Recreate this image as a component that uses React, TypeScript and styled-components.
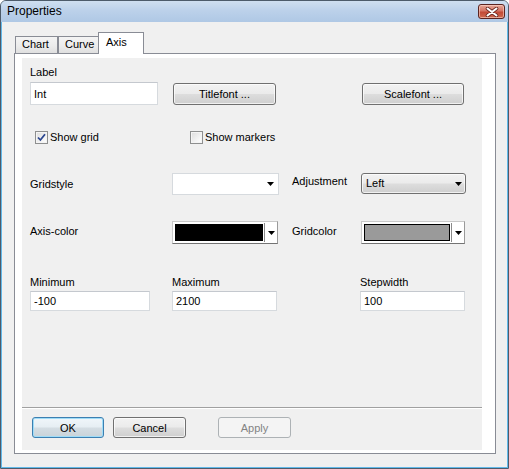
import React from 'react';
import styled, { createGlobalStyle, css } from 'styled-components';

const GlobalStyle = createGlobalStyle`
  html, body {
    margin: 0;
    padding: 0;
    background: #ffffff;
  }
  body {
    font-family: "Liberation Sans", Arial, sans-serif;
    font-size: 11px;
    color: #000;
  }
  * {
    box-sizing: border-box;
  }
`;

const Window = styled.div`
  width: 509px;
  height: 469px;
  display: flex;
  flex-direction: column;
  background: #f0f0f0;
  border: 1px solid #4d5b6a;
  border-radius: 6px 6px 0 0;
  box-shadow: inset 0 0 0 1px #62b9ea;
  overflow: hidden;
`;

const TitleBar = styled.div`
  height: 21px;
  flex: none;
  display: flex;
  align-items: flex-start;
  justify-content: space-between;
  padding: 0 3px 0 6px;
  background: linear-gradient(#cfdff0 0%, #bcd1ea 45%, #afc8e5 100%);
`;

const Title = styled.span`
  font-size: 12px;
  line-height: 21px;
  color: #000;
`;

const CloseButton = styled.button`
  margin-top: 3px;
  width: 27px;
  height: 15px;
  padding: 0;
  border: 1px solid #5b2420;
  border-radius: 3px;
  background: linear-gradient(#e6a797 0%, #d47565 45%, #c24a37 55%, #cf6a4f 100%);
  box-shadow: inset 0 0 0 1px rgba(255, 220, 210, 0.55);
  display: flex;
  align-items: center;
  justify-content: center;
  cursor: default;
`;

const Body = styled.div`
  flex: 1;
  display: flex;
  flex-direction: column;
  padding: 10px 12px 14px 13px;
  min-height: 0;
`;

const TabRow = styled.div`
  height: 22px;
  flex: none;
  display: flex;
  align-items: flex-end;
  margin-bottom: -1px;
`;

const Tab = styled.div<{ $active?: boolean; $width: number }>`
  width: ${p => p.$width}px;
  border: 1px solid #898c95;
  border-bottom: none;
  padding-left: 6px;
  line-height: 13px;
  cursor: default;
  ${p =>
    p.$active
      ? css`
          position: relative;
          z-index: 1;
          height: 22px;
          margin-left: -1px;
          padding-top: 3px;
          padding-left: 7px;
          background: #ffffff;
        `
      : css`
          height: 18px;
          padding-top: 1px;
          background: linear-gradient(#f4f4f4 0%, #ececec 50%, #dedede 100%);
          &:first-child {
            margin-left: 1px;
          }
        `}
`;

const Panel = styled.div`
  flex: 1;
  display: flex;
  flex-direction: column;
  border: 1px solid #898c95;
  background: #ffffff;
  padding: 4px 13px 3px 7px;
  min-height: 0;
`;

const Sheet = styled.div`
  flex: 1;
  display: flex;
  flex-direction: column;
  background: #f0f0f0;
`;

const Form = styled.div`
  flex: 1;
  padding: 8px 0 0 8px;
`;

const Row = styled.div<{ $top: number; $align?: string }>`
  display: grid;
  grid-template-columns: 142px 120px 69px 104px;
  align-items: ${p => p.$align || 'start'};
  margin-top: ${p => p.$top}px;
`;

const Field = styled.div<{ $col?: number; $shift?: number }>`
  display: flex;
  flex-direction: column;
  gap: ${p => (p.$col === undefined ? 3 : 2)}px;
  grid-column: ${p => p.$col ?? 1};
  margin-left: ${p => p.$shift ?? 0}px;
`;

const Caption = styled.span<{ $col?: number; $pad?: number }>`
  grid-column: ${p => p.$col ?? 'auto'};
  padding-top: ${p => p.$pad ?? 0}px;
  line-height: 13px;
  white-space: nowrap;
`;

const TextInput = styled.input<{ $width: number; $height: number }>`
  width: ${p => p.$width}px;
  height: ${p => p.$height}px;
  border: 1px solid #d6dade;
  border-top-color: #c4c8ce;
  background: #ffffff;
  padding: 0 3px;
  font-family: "Liberation Sans", Arial, sans-serif;
  font-size: 11px;
  color: #000;
  outline: none;
`;

const buttonFace = css`
  border: 1px solid #707070;
  border-radius: 3px;
  background: linear-gradient(#f2f2f2 0%, #ebebeb 48%, #dddddd 52%, #cfcfcf 100%);
  box-shadow: inset 0 0 0 1px rgba(255, 255, 255, 0.7);
`;

const PushButton = styled.button<{ $width: number; $col?: number; $shift?: number; $focused?: boolean }>`
  grid-column: ${p => p.$col ?? 'auto'};
  width: ${p => p.$width}px;
  height: 21px;
  margin-left: ${p => p.$shift ?? 0}px;
  padding: 0;
  font-family: "Liberation Sans", Arial, sans-serif;
  font-size: 11px;
  color: #000;
  cursor: default;
  ${buttonFace}
  ${p =>
    p.$focused &&
    css`
      border-color: #3c7fb1;
      box-shadow: inset 0 0 0 1px #9fdcf7;
      background: linear-gradient(#f0f6fa 0%, #e6eef3 48%, #d4dde3 52%, #c9d3d9 100%);
    `}
  &:disabled {
    border-color: #adb2b5;
    background: #f4f4f4;
    box-shadow: none;
    color: #838383;
  }
`;

const Check = styled.label<{ $col: number; $shift: number }>`
  grid-column: ${p => p.$col};
  margin-left: ${p => p.$shift}px;
  display: flex;
  align-items: center;
  gap: 2px;
  line-height: 13px;
  white-space: nowrap;
`;

const CheckBox = styled.span`
  width: 13px;
  height: 13px;
  flex: none;
  border: 1px solid #8e8f8f;
  background: linear-gradient(135deg, #dcdcdc 0%, #f6f6f6 70%, #ffffff 100%);
  box-shadow: inset 0 0 0 1px #f4f4f4;
  display: flex;
  align-items: center;
  justify-content: center;
`;

const ComboBox = styled.div<{ $width: number; $col: number }>`
  grid-column: ${p => p.$col};
  width: ${p => p.$width}px;
  height: 22px;
  border: 1px solid #d6dade;
  background: #ffffff;
  display: flex;
  align-items: center;
  justify-content: flex-end;
  padding-right: 4px;
`;

const ButtonCombo = styled.div<{ $width: number; $col: number }>`
  grid-column: ${p => p.$col};
  width: ${p => p.$width}px;
  height: 21px;
  ${buttonFace}
  display: flex;
  align-items: center;
  justify-content: space-between;
  padding: 0 3px 0 4px;
  line-height: 13px;
`;

const ColorCombo = styled.div<{ $width: number; $col: number }>`
  grid-column: ${p => p.$col};
  width: ${p => p.$width}px;
  height: 23px;
  border: 1px solid #c9c9c9;
  border-bottom-color: #737373;
  border-right-color: #9a9a9a;
  background: #ffffff;
  display: flex;
  align-items: stretch;
  padding: 2px 0 2px 2px;
`;

const Swatch = styled.div<{ $color: string }>`
  flex: 1;
  border: 1px solid #000;
  background: ${p => p.$color};
`;

const DropDivider = styled.div`
  width: 1px;
  margin: -1px 0 -1px 1px;
  background: #8a8a8a;
`;

const DropCell = styled.div`
  width: 12px;
  display: flex;
  align-items: center;
  justify-content: center;
`;

const Footer = styled.div`
  height: 43px;
  flex: none;
  border-top: 1px solid #a0a0a0;
  box-shadow: inset 0 1px 0 #ffffff;
  display: flex;
  align-items: flex-start;
  padding: 9px 0 0 10px;
  gap: 9px;
`;

const Arrow = () => (
  <svg width="7" height="4" viewBox="0 0 7 4">
    <polygon points="0,0 7,0 3.5,4" fill="#000" />
  </svg>
);

const CheckMark = () => (
  <svg width="9" height="9" viewBox="0 0 9 9">
    <path d="M1 4.5 L3.4 7 L8 1.2" fill="none" stroke="#2b4690" strokeWidth="1.8" />
  </svg>
);

const CloseGlyph = () => (
  <svg width="14" height="10" viewBox="0 0 14 10">
    <path d="M2.5 1.5 L11.5 8.5 M11.5 1.5 L2.5 8.5" stroke="#6a2a22" strokeWidth="3.6" strokeLinecap="round" />
    <path d="M2.5 1.5 L11.5 8.5 M11.5 1.5 L2.5 8.5" stroke="#ffffff" strokeWidth="2" strokeLinecap="round" />
  </svg>
);

const App: React.FC = () => {
  return (
    <>
      <GlobalStyle />
      <Window>
        <TitleBar>
          <Title>Properties</Title>
          <CloseButton aria-label="Close">
            <CloseGlyph />
          </CloseButton>
        </TitleBar>

        <Body>
          <TabRow>
            <Tab $width={43}>Chart</Tab>
            <Tab $width={41}>Curve</Tab>
            <Tab $width={46} $active>Axis</Tab>
          </TabRow>

          <Panel>
            <Sheet>
              <Form>
                <Row $top={0} $align="end">
                  <Field>
                    <Caption>Label</Caption>
                    <TextInput $width={128} $height={23} defaultValue="Int" />
                  </Field>
                  <PushButton $width={103} $col={2} $shift={1} style={{ height: 22 }}>
                    Titlefont ...
                  </PushButton>
                  <PushButton $width={102} $col={4} $shift={1} style={{ height: 22 }}>
                    Scalefont ...
                  </PushButton>
                </Row>

                <Row $top={26}>
                  <Check $col={1} $shift={5}>
                    <CheckBox>
                      <CheckMark />
                    </CheckBox>
                    Show grid
                  </Check>
                  <Check $col={2} $shift={18}>
                    <CheckBox />
                    Show markers
                  </Check>
                </Row>

                <Row $top={29}>
                  <Caption $pad={5}>Gridstyle</Caption>
                  <ComboBox $width={107} $col={2}>
                    <Arrow />
                  </ComboBox>
                  <Caption $pad={2}>Adjustment</Caption>
                  <ButtonCombo $width={105} $col={4}>
                    <span>Left</span>
                    <Arrow />
                  </ButtonCombo>
                </Row>

                <Row $top={26}>
                  <Caption $pad={4}>Axis-color</Caption>
                  <ColorCombo $width={106} $col={2}>
                    <Swatch $color="#000000" />
                    <DropDivider />
                    <DropCell>
                      <Arrow />
                    </DropCell>
                  </ColorCombo>
                  <Caption $pad={4}>Gridcolor</Caption>
                  <ColorCombo $width={104} $col={4}>
                    <Swatch $color="#9a9a9a" />
                    <DropDivider />
                    <DropCell>
                      <Arrow />
                    </DropCell>
                  </ColorCombo>
                </Row>

                <Row $top={32}>
                  <Field $col={1}>
                    <Caption>Minimum</Caption>
                    <TextInput $width={120} $height={20} defaultValue="-100" />
                  </Field>
                  <Field $col={2}>
                    <Caption>Maximum</Caption>
                    <TextInput $width={105} $height={20} defaultValue="2100" />
                  </Field>
                  <Field $col={4} $shift={-1}>
                    <Caption>Stepwidth</Caption>
                    <TextInput $width={105} $height={20} defaultValue="100" />
                  </Field>
                </Row>
              </Form>

              <Footer>
                <PushButton $width={72} $focused>OK</PushButton>
                <PushButton $width={73}>Cancel</PushButton>
                <PushButton $width={73} disabled style={{ marginLeft: 23 }}>
                  Apply
                </PushButton>
              </Footer>
            </Sheet>
          </Panel>
        </Body>
      </Window>
    </>
  );
};

export default App;
